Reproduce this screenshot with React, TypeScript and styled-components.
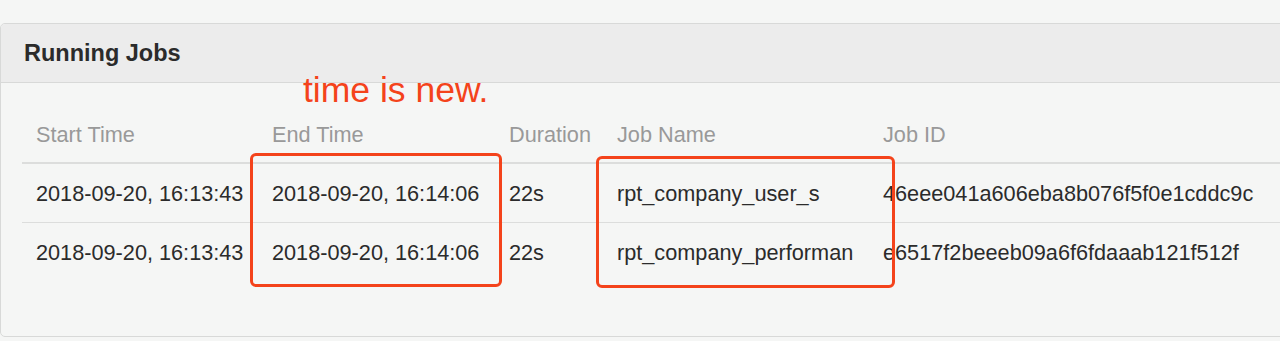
import React from "react";
import styled, { createGlobalStyle } from "styled-components";

interface Job {
  start: string;
  end: string;
  duration: string;
  name: string;
  id: string;
}

const jobs: Job[] = [
  {
    start: "2018-09-20, 16:13:43",
    end: "2018-09-20, 16:14:06",
    duration: "22s",
    name: "rpt_company_user_s",
    id: "46eee041a606eba8b076f5f0e1cddc9c",
  },
  {
    start: "2018-09-20, 16:13:43",
    end: "2018-09-20, 16:14:06",
    duration: "22s",
    name: "rpt_company_performan",
    id: "e6517f2beeeb09a6f6fdaaab121f512f",
  },
];

const columns = [
  { label: "Start Time", width: 236 },
  { label: "End Time", width: 237 },
  { label: "Duration", width: 108 },
  { label: "Job Name", width: 266 },
  { label: "Job ID", width: 0 },
];

function App() {
  return (
    <>
      <GlobalStyle />
      <Page>
        <Panel>
          <PanelHeader>
            <h3>Running Jobs</h3>
          </PanelHeader>
          <PanelBody>
            <JobsTable>
              <colgroup>
                {columns.map((c) => (
                  <col key={c.label} style={c.width ? { width: c.width } : undefined} />
                ))}
              </colgroup>
              <thead>
                <tr>
                  {columns.map((c) => (
                    <th key={c.label}>{c.label}</th>
                  ))}
                </tr>
              </thead>
              <tbody>
                {jobs.map((job) => (
                  <tr key={job.id}>
                    <td>{job.start}</td>
                    <td>{job.end}</td>
                    <td>{job.duration}</td>
                    <td>{job.name}</td>
                    <td>{job.id}</td>
                  </tr>
                ))}
              </tbody>
            </JobsTable>
          </PanelBody>
        </Panel>

        <Note>time is new.</Note>
        <Highlight $left={250} $top={153} $width={252} $height={134} />
        <Highlight $left={596} $top={156} $width={299} $height={132} />
      </Page>
    </>
  );
}

const GlobalStyle = createGlobalStyle`
  body {
    margin: 0;
    background: #f5f6f5;
    font-family: "Liberation Sans", Arial, sans-serif;
    overflow: hidden;
  }
`;

const Page = styled.div`
  position: relative;
  padding-top: 23px;
`;

const Panel = styled.div`
  margin-right: -20px;
  height: 312px;
  border: 1px solid #d8d9d8;
  border-radius: 5px;
  background: #f5f6f5;
  overflow: hidden;
`;

const PanelHeader = styled.div`
  display: flex;
  align-items: center;
  height: 58px;
  padding: 0 23px;
  background: #ececec;
  border-bottom: 1px solid #d8d9d8;

  h3 {
    margin: 0;
    font-size: 23.5px;
    font-weight: 700;
    color: #2b2b2b;
  }
`;

const PanelBody = styled.div`
  padding: 21px 0 0 21px;
`;

const JobsTable = styled.table`
  width: 100%;
  border-collapse: collapse;
  table-layout: fixed;
  font-size: 21.7px;

  th,
  td {
    padding: 0 14px;
    text-align: left;
    white-space: nowrap;
    overflow: hidden;
  }

  th {
    height: 55px;
    padding-top: 3px;
    font-weight: 400;
    color: #999;
    border-bottom: 2px solid #dcdddc;
  }

  td {
    height: 56px;
    padding-top: 2px;
    color: #2b2b2b;
  }

  tbody tr + tr td {
    border-top: 1px solid #dcdddc;
  }
`;

const Note = styled.div`
  position: absolute;
  left: 303px;
  top: 72px;
  font-size: 35.5px;
  line-height: 36px;
  color: #f4431b;
`;

const Highlight = styled.div<{ $left: number; $top: number; $width: number; $height: number }>`
  position: absolute;
  left: ${(p) => p.$left}px;
  top: ${(p) => p.$top}px;
  width: ${(p) => p.$width}px;
  height: ${(p) => p.$height}px;
  box-sizing: border-box;
  border: 3px solid #f4431b;
  border-radius: 6px;
`;

export default App;
